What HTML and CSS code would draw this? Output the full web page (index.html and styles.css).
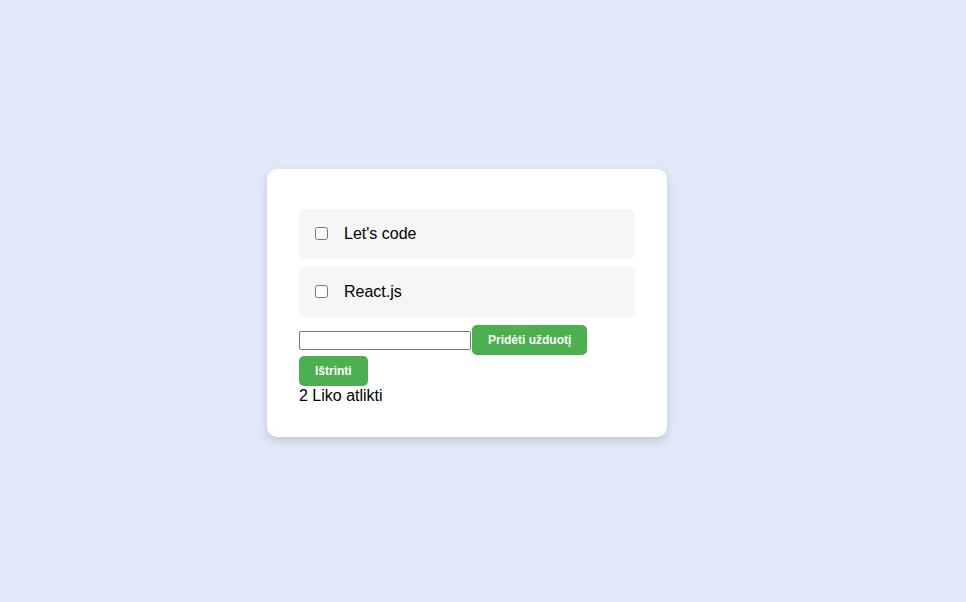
FILE: index.html
```html
<!DOCTYPE html>
<html lang="lt">
<head>
<meta charset="utf-8">
<title>Užduotys</title>
<link rel="stylesheet" href="styles.css">
</head>
<body>
<div class="page">
  <div class="card">
    <ul class="list">
      <li class="item"><input type="checkbox" class="check"><span class="label">Let's code</span></li>
      <li class="item"><input type="checkbox" class="check"><span class="label">React.js</span></li>
    </ul>
    <div class="controls"><input type="text" class="field"><button class="btn">Pridėti užduotį</button><button class="btn">Ištrinti</button></div>
    <div class="count">2 Liko atlikti</div>
  </div>
</div>
</body>
</html>
```
FILE: styles.css
```css
html, body {
  margin: 0;
  padding: 0;
}
body {
  background: #e1e9f9;
  font-family: "Liberation Sans", Arial, sans-serif;
  font-size: 16px;
  color: #000;
}
.page {
  min-height: 100vh;
  box-sizing: border-box;
  display: flex;
  align-items: center;
  justify-content: center;
  padding: 4px 32px 0 0;
}
.card {
  width: 400px;
  box-sizing: border-box;
  background: #fff;
  border-radius: 10px;
  box-shadow: 0 4px 10px rgba(0, 0, 0, 0.15);
  padding: 32px;
}
.list {
  list-style: none;
  margin: 8px 0 0;
  padding: 0;
}
.item {
  display: flex;
  align-items: center;
  height: 50px;
  box-sizing: border-box;
  padding: 0 16px;
  background: #f6f6f6;
  border-radius: 5px;
  margin-bottom: 8px;
}
.check {
  width: 13px;
  height: 13px;
  margin: -2px 16px 0 0;
}
.label {
  font-size: 16px;
}
.controls {
  line-height: 0;
}
.field {
  width: 172px;
  height: 19px;
  box-sizing: border-box;
  margin: 0;
  vertical-align: middle;
  font-size: 13px;
}
.btn {
  background: #4caf50;
  color: #fff;
  border: none;
  border-radius: 5px;
  padding: 8px 16px;
  font-family: "Liberation Sans", Arial, sans-serif;
  font-weight: bold;
  font-size: 12px;
  line-height: 14px;
  height: 30px;
  margin: 0 0 1px 1px;
  vertical-align: middle;
  cursor: pointer;
}
.btn + .btn {
  margin-left: 0;
}
.count {
  line-height: 18px;
}
```
